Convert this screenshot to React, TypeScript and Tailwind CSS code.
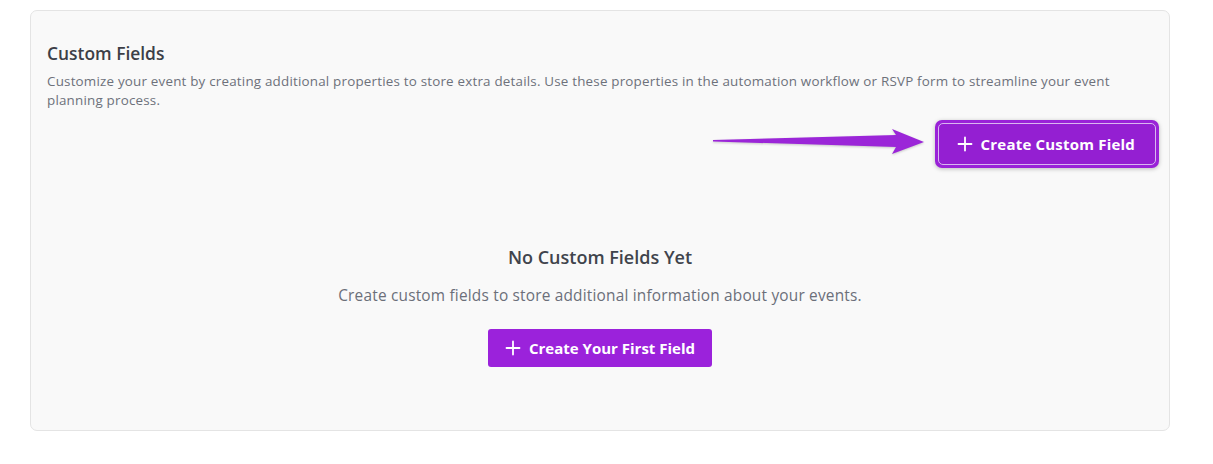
import React from "react";

function Plus({ className }: { className?: string }) {
  return (
    <svg className={className} viewBox="0 0 16 16" fill="none" stroke="currentColor" strokeWidth="1.8" strokeLinecap="round">
      <path d="M8 1.5v13M1.5 8h13" />
    </svg>
  );
}

export default function App() {
  return (
    <div className="bg-white w-[1213px] h-[464px] pt-[10px] pl-[30px]" style={{ fontFamily: "'Open Sans', 'Noto Sans', sans-serif" }}>
      <div className="w-[1140px] h-[421px] rounded-[7px] border border-[#e4e4e4] bg-[#f9f9f9] flex flex-col">
        <div className="pt-[30px] pl-4 pr-6">
          <h2 className="text-[17.4px] leading-[24px] font-semibold text-[#3c3f47]">Custom Fields</h2>
          <p className="mt-[7px] text-[13.4px] leading-[19px] tracking-[0.2px] text-[#6d717b]">
            Customize your event by creating additional properties to store extra details. Use these properties in the automation workflow or RSVP form to streamline your event planning process.
          </p>
        </div>
        <div className="mt-[10px] flex items-center justify-end pr-[10px]">
          <svg width="216" height="30" viewBox="0 0 216 30" className="mr-[6px] drop-shadow-[0_1px_1px_rgba(0,0,0,0.2)]">
            <polygon points="0,11 183,6 179,0 211,13 179,25 183,18 0,12.5" fill="#9b26d8" />
          </svg>
          <div className="rounded-[7px] bg-[#9a22d8] p-[3px] shadow-[0_1px_4px_rgba(0,0,0,0.25)]">
            <button className="flex items-center gap-[8px] h-[42px] pl-[18px] pr-[20px] rounded-[5px] border border-[#d9b6f0] bg-[#941fd2] text-white text-[15px] font-bold tracking-[0.2px]">
              <Plus className="w-[16px] h-[16px]" />
              Create Custom Field
            </button>
          </div>
        </div>
        <div className="flex flex-col items-center mt-[76px]">
          <h3 className="text-[18px] leading-[26px] font-semibold text-[#40444c]">No Custom Fields Yet</h3>
          <p className="mt-[15px] text-[15.4px] leading-[22px] tracking-[0.2px] text-[#6b6f79]">Create custom fields to store additional information about your events.</p>
          <button className="mt-[22px] flex items-center gap-[8px] h-[38px] px-[17px] rounded-[3px] bg-[#9b22db] text-white text-[15px] font-bold">
            <Plus className="w-[16px] h-[16px]" />
            Create Your First Field
          </button>
        </div>
      </div>
    </div>
  );
}
